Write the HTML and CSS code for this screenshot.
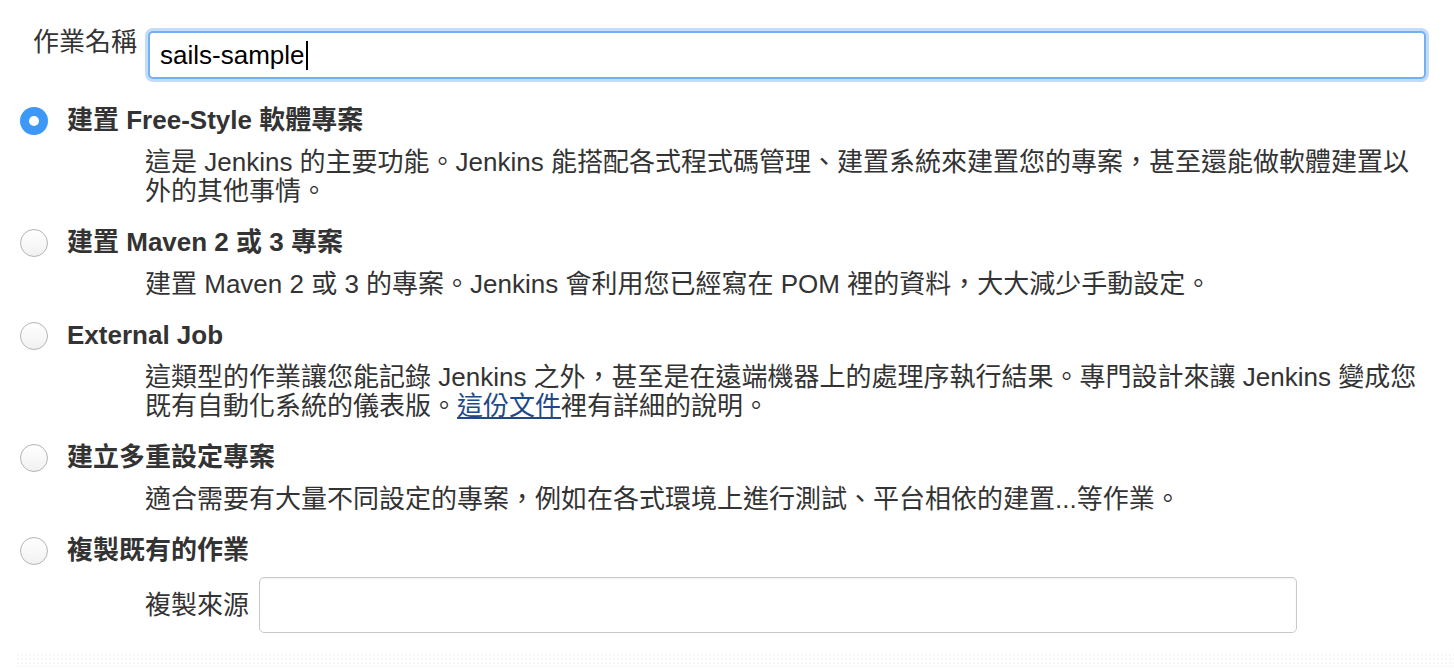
FILE: index.html
```html
<!DOCTYPE html>
<html lang="zh-Hant">
<head>
<meta charset="utf-8">
<title>新增作業</title>
<link rel="stylesheet" href="styles.css">
</head>
<body>
<div class="page">
  <div class="name-row">
    <label class="name-label">作業名稱</label>
    <div class="text-input focused"><span class="value">sails-sample</span><span class="caret"></span></div>
  </div>

  <div class="options">
    <div class="option">
      <div class="option-head"><span class="radio checked"></span><span class="option-title">建置 Free-Style 軟體專案</span></div>
      <div class="option-desc">這是 Jenkins 的主要功能。Jenkins 能搭配各式程式碼管理、建置系統來建置您的專案，甚至還能做軟體建置以<br>外的其他事情。</div>
    </div>
    <div class="option">
      <div class="option-head"><span class="radio"></span><span class="option-title">建置 Maven 2 或 3 專案</span></div>
      <div class="option-desc">建置 Maven 2 或 3 的專案。Jenkins 會利用您已經寫在 POM 裡的資料，大大減少手動設定。</div>
    </div>
    <div class="option">
      <div class="option-head"><span class="radio"></span><span class="option-title">External Job</span></div>
      <div class="option-desc">這類型的作業讓您能記錄 Jenkins 之外，甚至是在遠端機器上的處理序執行結果。專門設計來讓 Jenkins 變成您<br>既有自動化系統的儀表版。<a class="link" href="#">這份文件</a>裡有詳細的說明。</div>
    </div>
    <div class="option">
      <div class="option-head"><span class="radio"></span><span class="option-title">建立多重設定專案</span></div>
      <div class="option-desc">適合需要有大量不同設定的專案，例如在各式環境上進行測試、平台相依的建置...等作業。</div>
    </div>
    <div class="option">
      <div class="option-head"><span class="radio"></span><span class="option-title">複製既有的作業</span></div>
      <div class="copy-row">
        <label class="copy-label">複製來源</label>
        <div class="text-input plain"></div>
      </div>
    </div>
  </div>
  <div class="footer-strip"></div>
</div>
</body>
</html>
```

FILE: styles.css
```css
html, body {
  margin: 0;
  padding: 0;
  background: #ffffff;
}

body {
  font-family: "Liberation Sans", "Noto Sans CJK TC", sans-serif;
  font-size: 26px;
  line-height: 29px;
  color: #333333;
}

.page {
  padding-top: 28px;
}

.name-row {
  display: flex;
  align-items: flex-start;
  padding-left: 33px;
  gap: 11px;
}

.name-label {
  color: #333333;
  white-space: nowrap;
}

.text-input {
  box-sizing: border-box;
  background: #ffffff;
  display: flex;
  align-items: center;
}

.text-input.focused {
  margin-top: 3px;
  width: 1278px;
  height: 48px;
  border: 2px solid #74aef4;
  border-radius: 5px;
  box-shadow: 0 0 0 3px #c3dcfa;
  padding-left: 10px;
  color: #000000;
}

.caret {
  display: inline-block;
  width: 2px;
  height: 29px;
  background: #000000;
  margin-left: 1px;
}

.text-input.plain {
  width: 1038px;
  height: 56px;
  border: 1px solid #c9c9c9;
  border-radius: 5px;
  box-shadow: inset 0 1px 2px rgba(0, 0, 0, 0.06);
}

.options {
  margin-top: 27px;
  padding-left: 20px;
  display: flex;
  flex-direction: column;
  gap: 22px;
}

.option-head {
  display: flex;
  align-items: center;
  gap: 19px;
  height: 29px;
}

.radio {
  box-sizing: border-box;
  width: 28px;
  height: 28px;
  border-radius: 50%;
  border: 1px solid #b4b4b4;
  background: linear-gradient(#ffffff, #f1f1f1);
  flex: none;
  position: relative;
}

.radio.checked {
  border: none;
  background: #3d98f7;
}

.radio.checked::after {
  content: "";
  position: absolute;
  left: 9px;
  top: 9px;
  width: 10px;
  height: 10px;
  border-radius: 50%;
  background: #ffffff;
}

.option-title {
  font-weight: bold;
  color: #333333;
  white-space: nowrap;
}

.option-desc {
  margin: 13px 0 0 125px;
  white-space: nowrap;
}

.link {
  color: #204a87;
  text-decoration: underline;
}

.copy-row {
  display: flex;
  align-items: center;
  gap: 10px;
  margin: 12px 0 0 125px;
}

.copy-label {
  white-space: nowrap;
}

.footer-strip {
  margin-top: 20px;
  margin-left: 16px;
  height: 14px;
  background-image: radial-gradient(circle, #f6f6f6 1px, transparent 1.5px);
  background-size: 4px 4px;
}
```
